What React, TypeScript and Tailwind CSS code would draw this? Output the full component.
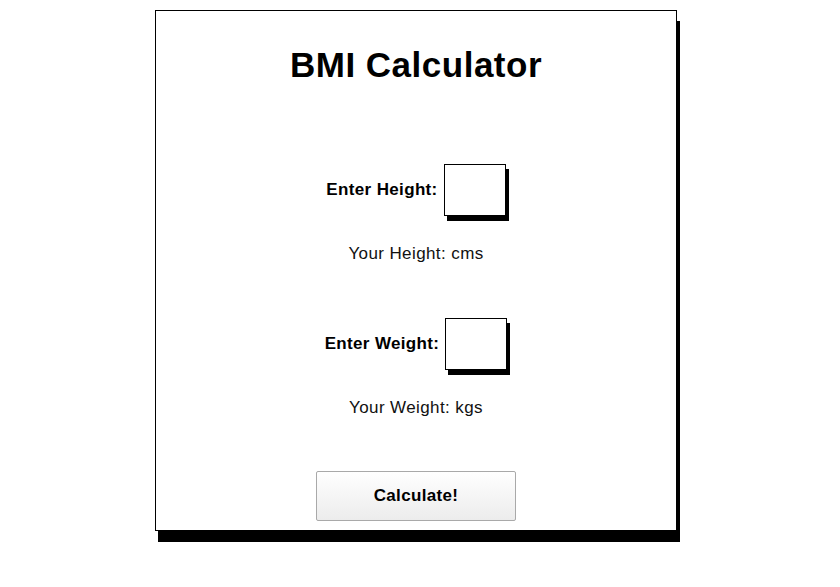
export default function App() {
  return (
    <div className="min-h-[587px] bg-white pt-[10px] pl-[155px]" style={{ fontFamily: '"Liberation Sans", Arial, sans-serif' }}>
      <div className="flex h-[521px] w-[522px] flex-col items-center border border-black bg-white shadow-[3px_11px_0_#000]">
        <h1 className="mt-[34px] text-[35px] leading-[40px] font-bold tracking-[0.5px] text-black">BMI Calculator</h1>

        <div className="mt-[79px] flex items-center gap-[6px]">
          <span className="text-[17px] leading-[20px] font-bold tracking-[0.35px] text-black">Enter Height:</span>
          <div className="h-[52px] w-[62px] border border-black bg-white shadow-[3px_5px_0_#000]" />
        </div>
        <p className="mt-[28px] text-[17px] leading-[20px] tracking-[0.4px] text-[#111]">Your Height: cms</p>

        <div className="mt-[54px] flex items-center gap-[6px]">
          <span className="text-[17px] leading-[20px] font-bold tracking-[0.35px] text-black">Enter Weight:</span>
          <div className="h-[52px] w-[62px] border border-black bg-white shadow-[3px_5px_0_#000]" />
        </div>
        <p className="mt-[28px] text-[17px] leading-[20px] tracking-[0.4px] text-[#111]">Your Weight: kgs</p>

        <button className="mt-[53px] flex h-[50px] w-[200px] items-center justify-center rounded-[2px] border border-[#a9a9a9] bg-gradient-to-b from-white to-[#ececec] text-[17px] font-bold tracking-[0.35px] text-black">
          Calculate!
        </button>
      </div>
    </div>
  );
}
